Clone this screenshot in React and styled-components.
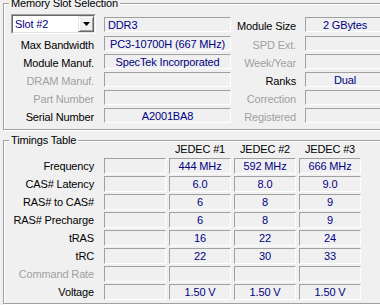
import React from 'react';
import styled, { createGlobalStyle } from 'styled-components';

const Global = createGlobalStyle`
  html, body { margin: 0; padding: 0; background: #f0f0f0; }
  body {
    width: 380px; height: 305px; overflow: hidden;
    font-family: "Liberation Sans", Arial, sans-serif;
    font-size: 11px; color: #000;
    letter-spacing: -0.15px;
  }
`;

const Page = styled.div`
  display: flex;
  flex-direction: column;
  width: 400px;
  padding-left: 3px;
`;

const Group = styled.section`
  position: relative;
  box-sizing: border-box;
  width: 390px;
  margin-top: ${p => p.$mt}px;
  padding: ${p => p.$pt}px 0 ${p => p.$pb}px 7px;
  border: 1px solid #a0a0a0;
  box-shadow: inset 1px 1px 0 #fff, 1px 1px 0 #fff;
`;

const Legend = styled.span`
  position: absolute;
  top: -7px;
  left: 5px;
  padding: 0 2px;
  line-height: 13px;
  background: #f0f0f0;
  white-space: nowrap;
`;

const SlotGrid = styled.div`
  display: grid;
  grid-template-columns: 93px 127px 74px 80px;
  grid-template-rows: 20px repeat(5, 18px);
  align-items: start;
`;

const Label = styled.div`
  text-align: right;
  padding-right: ${p => p.$pr}px;
  margin-top: ${p => p.$mt}px;
  line-height: 13px;
  white-space: nowrap;
  color: ${p => (p.$off ? '#a0a0a0' : '#000')};
`;

const Field = styled.div`
  box-sizing: border-box;
  height: ${p => p.$h}px;
  margin-top: ${p => p.$mt}px;
  border: 1px solid;
  border-color: #a0a0a0 #fff #fff #a0a0a0;
  color: #000080;
  line-height: ${p => p.$h - 1}px;
  text-align: ${p => (p.$left ? 'left' : 'center')};
  padding-left: ${p => (p.$left ? 3 : 0)}px;
  white-space: nowrap;
  overflow: hidden;
`;

const Combo = styled.div`
  box-sizing: border-box;
  width: 85px;
  height: 20px;
  display: flex;
  border: 1px solid;
  border-color: #a0a0a0 #fff #fff #a0a0a0;
`;

const ComboInner = styled.div`
  flex: 1;
  display: flex;
  background: #fff;
  border: 1px solid;
  border-color: #696969 #e3e3e3 #e3e3e3 #696969;
`;

const ComboText = styled.span`
  flex: 1;
  color: #000080;
  padding-left: 2px;
  line-height: 16px;
`;

const DropButton = styled.div`
  box-sizing: border-box;
  width: 16px;
  display: flex;
  align-items: center;
  justify-content: center;
  background: #f0f0f0;
  border: 1px solid;
  border-color: #e3e3e3 #696969 #696969 #e3e3e3;
  box-shadow: inset 1px 1px 0 #fff, inset -1px -1px 0 #a0a0a0;
`;

const TimingGrid = styled.div`
  display: grid;
  grid-template-columns: 90px repeat(4, 62px);
  column-gap: 3px;
  row-gap: 2px;
  grid-auto-rows: 16px;
  grid-template-rows: 13px;
  align-items: start;
`;

const Head = styled.div`
  text-align: center;
  line-height: 13px;
  white-space: nowrap;
`;

const slotRows = [
  ['Max Bandwidth', 'PC3-10700H (667 MHz)', 'SPD Ext.', ''],
  ['Module Manuf.', 'SpecTek Incorporated', 'Week/Year', ''],
  ['DRAM Manuf.', '', 'Ranks', 'Dual'],
  ['Part Number', '', 'Correction', ''],
  ['Serial Number', 'A2001BA8', 'Registered', ''],
];
const offLeft = { 'DRAM Manuf.': 1, 'Part Number': 1 };
const offRight = { 'SPD Ext.': 1, 'Week/Year': 1, 'Correction': 1, 'Registered': 1 };

const timingRows = [
  ['Frequency', ['444 MHz', '592 MHz', '666 MHz']],
  ['CAS# Latency', ['6.0', '8.0', '9.0']],
  ['RAS# to CAS#', ['6', '8', '9']],
  ['RAS# Precharge', ['6', '8', '9']],
  ['tRAS', ['16', '22', '24']],
  ['tRC', ['22', '30', '33']],
  ['Command Rate', ['', '', ''], true],
  ['Voltage', ['1.50 V', '1.50 V', '1.50 V']],
];

export default function App() {
  return (
    <>
      <Global />
      <Page>
        <Group $mt={3} $pt={10} $pb={5}>
          <Legend>Memory Slot Selection</Legend>
          <SlotGrid>
            <Combo>
              <ComboInner>
                <ComboText>Slot #2</ComboText>
                <DropButton>
                  <svg width="7" height="4" viewBox="0 0 7 4">
                    <polygon points="0,0 7,0 3.5,4" fill="#000" />
                  </svg>
                </DropButton>
              </ComboInner>
            </Combo>
            <Field $h={15} $mt={3} $left>DDR3</Field>
            <Label $pr={9} $mt={6}>Module Size</Label>
            <Field $h={15} $mt={3}>2 GBytes</Field>
            {slotRows.map(([l1, v1, l2, v2]) => (
              <React.Fragment key={l1}>
                <Label $pr={10} $mt={5} $off={offLeft[l1]}>{l1}</Label>
                <Field $h={15} $mt={2}>{v1}</Field>
                <Label $pr={9} $mt={5} $off={offRight[l2]}>{l2}</Label>
                <Field $h={15} $mt={2}>{v2}</Field>
              </React.Fragment>
            ))}
          </SlotGrid>
        </Group>
        <Group $mt={10} $pt={2} $pb={3}>
          <Legend>Timings Table</Legend>
          <TimingGrid>
            <Head />
            <Head />
            <Head>JEDEC #1</Head>
            <Head>JEDEC #2</Head>
            <Head>JEDEC #3</Head>
            {timingRows.map(([label, vals, off]) => (
              <React.Fragment key={label}>
                <Label $pr={7} $mt={2} $off={off}>{label}</Label>
                <Field $h={16} $mt={0} />
                {vals.map((v, i) => (
                  <Field key={i} $h={16} $mt={0}>{v}</Field>
                ))}
              </React.Fragment>
            ))}
          </TimingGrid>
        </Group>
      </Page>
    </>
  );
}
